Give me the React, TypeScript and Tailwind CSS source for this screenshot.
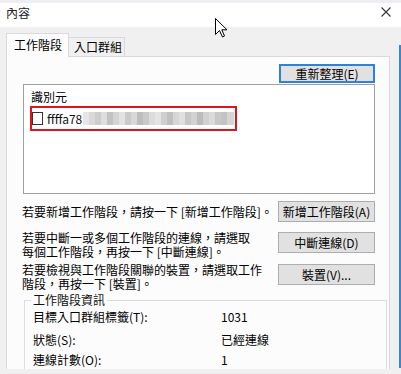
import React from "react";

const blurBlocks = [
  "w-[6px] bg-[#e6e6e6]",
  "w-[6px] bg-[#d9d9d9]",
  "w-[6px] bg-[#cdcdcd]",
  "w-[6px] bg-[#dedede]",
  "w-[6px] bg-[#c2c2c2]",
  "w-[6px] bg-[#d4d4d4]",
  "w-[6px] bg-[#e2e2e2]",
  "w-[6px] bg-[#cacaca]",
  "w-[6px] bg-[#d8d8d8]",
  "w-[6px] bg-[#bdbdbd]",
  "w-[6px] bg-[#c9c9c9]",
  "w-[6px] bg-[#dcdcdc]",
  "w-[6px] bg-[#e4e4e4]",
  "w-[6px] bg-[#cfcfcf]",
  "w-[6px] bg-[#c0c0c0]",
  "w-[6px] bg-[#d6d6d6]",
  "w-[6px] bg-[#e0e0e0]",
  "w-[6px] bg-[#c6c6c6]",
  "w-[6px] bg-[#d2d2d2]",
  "w-[6px] bg-[#bcbcbc]",
  "w-[6px] bg-[#d0d0d0]",
  "w-[6px] bg-[#dadada]",
  "w-[6px] bg-[#c8c8c8]",
  "w-[6px] bg-[#c3c3c3]",
  "w-[7px] bg-[#d5d5d5]",
];

function Btn({ children, focused }: { children: React.ReactNode; focused?: boolean }) {
  return (
    <div
      className={
        focused
          ? "w-[96px] h-[19px] shrink-0 border-2 border-[#2f82d6] bg-[#e1e1e1] flex items-center justify-center text-[12px] leading-[14px] text-black"
          : "w-[97px] h-[21px] shrink-0 border border-[#adadad] bg-[#e1e1e1] flex items-center justify-center text-[12px] leading-[14px] text-black"
      }
    >
      {children}
    </div>
  );
}

export default function App() {
  return (
    <div className="relative w-[401px] h-[374px] overflow-hidden bg-[#f0f0f0] font-['Noto_Sans_CJK_TC',sans-serif] text-[12px] leading-[14px] text-black flex flex-col">
      <div className="h-[3px] shrink-0 bg-[#eceef4]" />
      <div className="h-[24px] shrink-0 bg-white flex items-center justify-between pl-[6px] pr-[10px]">
        <span className="text-[#222] text-[12px] leading-[14px] mt-[-4px]">內容</span>
        <svg width="10" height="10" viewBox="0 0 10 10" className="mt-[-6px]">
          <path d="M0.5 0.5 L9.5 9.5 M9.5 0.5 L0.5 9.5" stroke="#333" strokeWidth="1.1" fill="none" />
        </svg>
      </div>

      <div className="flex-1 min-h-0 flex flex-col pl-[6px] pt-[6px] pr-[11px] pb-[5px]">
        <div className="flex items-end h-[23px] shrink-0 relative z-10">
          <div className="h-[24px] mb-[-1px] border border-b-0 border-[#d9d9d9] bg-[#fcfcfc] pl-[7px] pr-[6px] flex items-center">
            <span className="mt-[-1px]">工作階段</span>
          </div>
          <div className="h-[19px] border border-l-0 border-b-0 border-[#d9d9d9] bg-[#f0f0f0] pl-[5px] pr-[2px] flex items-center">
            <span>入口群組</span>
          </div>
        </div>

        <div className="flex-1 min-h-0 border border-b-0 border-[#d9d9d9] bg-[#fcfcfc] overflow-hidden pl-[16px] pr-[14px] pt-[7px] flex flex-col">
          <div className="flex justify-end shrink-0">
            <Btn focused>重新整理(E)</Btn>
          </div>

          <div className="mt-[1px] h-[110px] shrink-0 border border-[#a0a0a0] bg-white pl-[6px] pt-[5px]">
            <div className="pl-[1px]">識別元</div>
            <div className="mt-[2px] w-[207px] h-[25px] border-2 border-[#e0141e] flex items-center">
              <div className="w-[11px] h-[13px] border border-[#333] bg-white" />
              <span className="ml-[4px] text-[12px] leading-[14px] text-[#111]">ffffa78</span>
              <div className="ml-[1px] h-[13px] flex items-stretch">
                {blurBlocks.map((c, i) => (
                  <span key={i} className={c} />
                ))}
              </div>
            </div>
          </div>

          <div className="mt-[7px] shrink-0 flex items-center justify-between">
            <div className="-ml-px">若要新增工作階段，請按一下 [新增工作階段]。</div>
            <Btn>新增工作階段(A)</Btn>
          </div>

          <div className="mt-[9px] shrink-0 flex items-start justify-between">
            <div className="-ml-px">
              <div>若要中斷一或多個工作階段的連線，請選取</div>
              <div>每個工作階段，再按一下 [中斷連線]。</div>
            </div>
            <div className="mt-[1px]">
              <Btn>中斷連線(D)</Btn>
            </div>
          </div>

          <div className="mt-[4px] shrink-0 flex items-start justify-between">
            <div className="-ml-px">
              <div>若要檢視與工作階段關聯的裝置，請選取工作</div>
              <div>階段，再按一下 [裝置]。</div>
            </div>
            <div className="mt-[1px]">
              <Btn>裝置(V)...</Btn>
            </div>
          </div>

          <fieldset className="mt-[2px] shrink-0 ml-[1px] mr-[-12px] border border-[#dcdcdc] pl-[6px] pb-[20px]">
            <legend className="px-[2px] text-[#111]">工作階段資訊</legend>
            <div className="pl-[2px] grid grid-cols-[188px_1fr]">
              <div className="mt-[3px]">目標入口群組標籤(T):</div>
              <div className="mt-[3px]">1031</div>
              <div className="mt-[9px]">狀態(S):</div>
              <div className="mt-[9px]">已經連線</div>
              <div className="mt-[6px]">連線計數(O):</div>
              <div className="mt-[6px]">1</div>
            </div>
          </fieldset>
        </div>
      </div>

      <div className="absolute right-0 top-[45px] w-[2px] h-[323px] bg-[#3b86d0]" />

      <svg className="absolute left-[215px] top-[18px]" width="13" height="20" viewBox="0 0 13 20">
        <path
          d="M0.5 0.5 V16.5 L4.5 12.5 L7.5 19 L9.5 18 L6.8 11.8 H12 Z"
          fill="white"
          stroke="black"
          strokeWidth="1"
          strokeLinejoin="miter"
        />
      </svg>
    </div>
  );
}
